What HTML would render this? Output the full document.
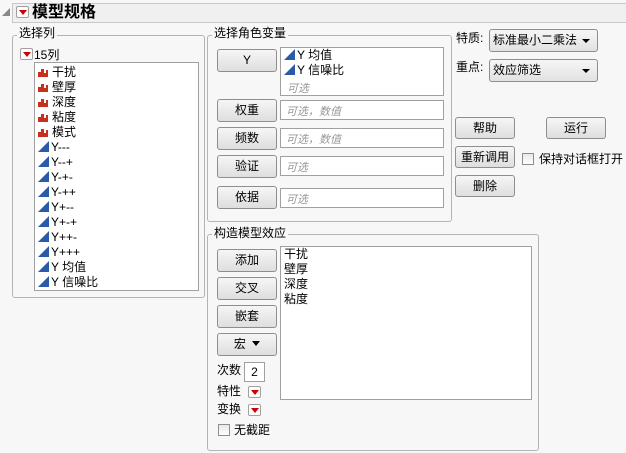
<!DOCTYPE html>
<html><head><meta charset="utf-8"><style>
*{box-sizing:border-box;margin:0;padding:0}
body{width:626px;height:453px;background:#f7f7f7;font-family:"Liberation Sans","Noto Sans CJK SC",sans-serif;font-size:12px;color:#000;position:relative;overflow:hidden}
.a{position:absolute;white-space:nowrap}
.grp{position:absolute;border:1px solid #b4b4b4;border-radius:3px}
.lg{position:absolute;background:#f7f7f7;padding:0 2px;font-size:12px;line-height:14px}
.box{position:absolute;background:#fff;border:1px solid #a0a0a0}
.btn{position:absolute;border:1px solid #8e8e8e;border-radius:3px;background:linear-gradient(#f6f6f6,#dedede);text-align:center;font-size:12px;line-height:20px}
.ph{color:#999;font-style:italic;font-size:11px;position:absolute;left:5px;top:2px}
.red{position:absolute;width:13px;height:12px;border:1px solid #a0a0a0;border-radius:2px;background:#fff}
.red:after{content:"";position:absolute;left:2px;top:3px;border-left:4px solid transparent;border-right:4px solid transparent;border-top:5px solid #c00}
.it{position:absolute;left:3px;height:15px;line-height:15px}
.bar{display:inline-block;width:10px;height:10px;vertical-align:-1px;margin-right:4px;position:relative}
.tri{display:inline-block;width:0;height:0;border-left:11px solid transparent;border-bottom:11px solid #2a5ba8;vertical-align:-1px;margin-right:2px}
.cb{position:absolute;width:12px;height:12px;border:1px solid #8e8e8e;background:linear-gradient(#e8e8e8,#fff)}
.dd{position:absolute;border:1px solid #8e8e8e;border-radius:3px;background:linear-gradient(#f6f6f6,#e2e2e2);line-height:20px;padding-left:3px}
.dd:after{content:"";position:absolute;right:7px;top:9px;border-left:4px solid transparent;border-right:4px solid transparent;border-top:4px solid #000}
</style></head><body>
<div class="a" style="left:2px;top:8px;width:0;height:0;border-left:8px solid transparent;border-bottom:8px solid #888"></div>
<div class="a" style="left:12px;top:3px;width:614px;height:20px;border:1px solid #c8c8c8;border-right:none;background:#f0f0f0"></div>
<div class="red" style="left:16px;top:6px"></div>
<div class="a" style="left:32px;top:2px;font-weight:bold;font-size:16px;line-height:22px">模型规格</div>

<div class="grp" style="left:12px;top:35px;width:193px;height:263px"></div>
<div class="lg" style="left:17px;top:26px">选择列</div>
<div class="red" style="left:20px;top:48px"></div>
<div class="a" style="left:34px;top:47px;line-height:16px">15列</div>
<div class="box" style="left:34px;top:62px;width:165px;height:229px">
<div class="it" style="top:2px"><span class="bar"><svg width="10" height="10"><path d="M0 10V5h3V2h3v4h2v-3h2v7z" fill="#c8301e"/></svg></span>干扰</div>
<div class="it" style="top:17px"><span class="bar"><svg width="10" height="10"><path d="M0 10V5h3V2h3v4h2v-3h2v7z" fill="#c8301e"/></svg></span>壁厚</div>
<div class="it" style="top:32px"><span class="bar"><svg width="10" height="10"><path d="M0 10V5h3V2h3v4h2v-3h2v7z" fill="#c8301e"/></svg></span>深度</div>
<div class="it" style="top:47px"><span class="bar"><svg width="10" height="10"><path d="M0 10V5h3V2h3v4h2v-3h2v7z" fill="#c8301e"/></svg></span>粘度</div>
<div class="it" style="top:62px"><span class="bar"><svg width="10" height="10"><path d="M0 10V5h3V2h3v4h2v-3h2v7z" fill="#c8301e"/></svg></span>模式</div>
<div class="it" style="top:77px"><span class="tri"></span>Y---</div>
<div class="it" style="top:92px"><span class="tri"></span>Y--+</div>
<div class="it" style="top:107px"><span class="tri"></span>Y-+-</div>
<div class="it" style="top:122px"><span class="tri"></span>Y-++</div>
<div class="it" style="top:137px"><span class="tri"></span>Y+--</div>
<div class="it" style="top:152px"><span class="tri"></span>Y+-+</div>
<div class="it" style="top:167px"><span class="tri"></span>Y++-</div>
<div class="it" style="top:182px"><span class="tri"></span>Y+++</div>
<div class="it" style="top:197px"><span class="tri"></span>Y 均值</div>
<div class="it" style="top:212px"><span class="tri"></span>Y 信噪比</div>
</div>

<div class="grp" style="left:207px;top:35px;width:245px;height:187px"></div>
<div class="lg" style="left:212px;top:26px">选择角色变量</div>
<div class="btn" style="left:217px;top:49px;width:60px;height:23px">Y</div>
<div class="box" style="left:280px;top:47px;width:164px;height:49px">
<div class="it" style="top:0;left:3px"><span class="tri"></span>Y 均值</div>
<div class="it" style="top:15px;left:3px"><span class="tri"></span>Y 信噪比</div>
<div class="ph" style="top:32px;left:6px">可选</div></div>
<div class="btn" style="left:217px;top:99px;width:60px;height:23px">权重</div>
<div class="box" style="left:280px;top:100px;width:164px;height:20px"><div class="ph">可选，数值</div></div>
<div class="btn" style="left:217px;top:127px;width:60px;height:23px">频数</div>
<div class="box" style="left:280px;top:128px;width:164px;height:20px"><div class="ph">可选，数值</div></div>
<div class="btn" style="left:217px;top:155px;width:60px;height:23px">验证</div>
<div class="box" style="left:280px;top:156px;width:164px;height:20px"><div class="ph">可选</div></div>
<div class="btn" style="left:217px;top:186px;width:60px;height:23px">依据</div>
<div class="box" style="left:280px;top:188px;width:164px;height:20px"><div class="ph">可选</div></div>

<div class="a" style="left:456px;top:31px;line-height:14px">特质:</div>
<div class="dd" style="left:489px;top:29px;width:109px;height:23px">标准最小二乘法</div>
<div class="a" style="left:456px;top:60px;line-height:14px">重点:</div>
<div class="dd" style="left:489px;top:59px;width:109px;height:23px">效应筛选</div>
<div class="btn" style="left:455px;top:117px;width:60px;height:22px">帮助</div>
<div class="btn" style="left:546px;top:117px;width:60px;height:22px">运行</div>
<div class="btn" style="left:455px;top:146px;width:60px;height:22px">重新调用</div>
<div class="cb" style="left:522px;top:153px"></div>
<div class="a" style="left:539px;top:151px;line-height:16px">保持对话框打开</div>
<div class="btn" style="left:455px;top:175px;width:60px;height:22px">删除</div>

<div class="grp" style="left:207px;top:234px;width:332px;height:217px"></div>
<div class="lg" style="left:212px;top:226px">构造模型效应</div>
<div class="box" style="left:280px;top:246px;width:252px;height:154px">
<div class="it" style="top:0;left:3px">干扰</div>
<div class="it" style="top:15px;left:3px">壁厚</div>
<div class="it" style="top:30px;left:3px">深度</div>
<div class="it" style="top:45px;left:3px">粘度</div></div>
<div class="btn" style="left:217px;top:249px;width:60px;height:23px">添加</div>
<div class="btn" style="left:217px;top:277px;width:60px;height:23px">交叉</div>
<div class="btn" style="left:217px;top:305px;width:60px;height:23px">嵌套</div>
<div class="btn" style="left:217px;top:333px;width:60px;height:23px">宏 <span style="display:inline-block;border-left:4px solid transparent;border-right:4px solid transparent;border-top:5px solid #000;vertical-align:2px;margin-left:3px"></span></div>
<div class="a" style="left:217px;top:362px;line-height:16px">次数</div>
<div class="box" style="left:244px;top:362px;width:21px;height:20px;text-align:center;line-height:18px">2</div>
<div class="a" style="left:217px;top:383px;line-height:16px">特性</div>
<div class="red" style="left:248px;top:386px"></div>
<div class="a" style="left:217px;top:401px;line-height:16px">变换</div>
<div class="red" style="left:248px;top:404px"></div>
<div class="cb" style="left:218px;top:424px"></div>
<div class="a" style="left:234px;top:422px;line-height:16px">无截距</div>
</body></html>
